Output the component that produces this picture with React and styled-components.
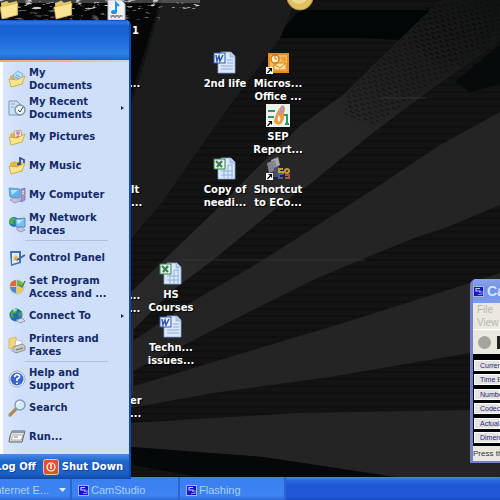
import React from 'react'
import styled, { createGlobalStyle } from 'styled-components';

const GlobalStyle = createGlobalStyle`
  * {
    box-sizing: border-box;
  }
  body {
    margin: 0;
    background: #121212;
    font-family: "DejaVu Sans", Verdana, sans-serif;
    font-size: 10px;
    line-height: 13px;
  }
  button {
    margin: 0;
    padding: 0;
    border: 0;
    background: none;
    color: inherit;
    font: inherit;
  }
`

const Screen = styled.div`
  position: relative;
  display: flex;
  flex-direction: column;
  height: 100vh;
  overflow: hidden;
`
const Desktop = styled.main`
  position: relative;
  flex: 1;
  overflow: hidden;
`
const WallpaperSvg = styled.svg`
  display: block;
  width: 100%;
  height: 100%;
`

/* desktop icons sit freely on the wallpaper */
const Shortcut = styled.a`
  position: absolute;
  left: ${props => props.$x}px;
  top: ${props => props.$y}px;
  width: 54px;
  display: flex;
  flex-direction: column;
  align-items: center;
  gap: 2px;
  color: #fff;
  font-weight: bold;
  text-align: center;
  text-decoration: none;
  white-space: pre;
  text-shadow: 1px 1px 1px #000;

  svg {
    width: 24px;
    height: 24px;
  }
`
const CoveredLabel = styled(Shortcut)`
  width: auto;
  align-items: flex-start;
  text-align: left;
`

const Menu = styled.nav`
  position: absolute;
  left: 0;
  bottom: 21px;
  width: 131px;
  overflow: hidden;
  border-right: 2px solid #1148b8;
  border-top-right-radius: 5px;
  background: #cfdffa;
`
const MenuHeader = styled.div`
  height: 40px;
  background: linear-gradient(#0f4fb8 0, #2a7be4 2px, #1660d0 6px, #1a66d6 40%, #2f80e6 85%, #1f62c8);
`
const MenuBody = styled.div`
  border-left: 3px solid #fff;
  padding: 2px 0 3px 5px;
  background: linear-gradient(90deg, #d9e6fc, #cfdffa 20px);
`
const Stripe = styled.div`
  height: 2px;
  background: linear-gradient(90deg, #f4a860, #e8b890 50%, #c8d4f0);
`
const MenuItem = styled.button`
  display: flex;
  align-items: center;
  gap: 3px;
  width: 100%;
  height: 29px;
  color: #142a68;
  font-weight: bold;
  text-align: left;

  > svg {
    flex: none;
    width: 18px;
    height: 18px;
  }
`
const MenuLabel = styled.span`
  width: 81px;
`
const Submenu = styled.span`
  margin-left: 8px;
  border: 2px solid transparent;
  border-left: 3px solid #142a68;
  border-right: 0;
`
const Divider = styled.hr`
  height: 1px;
  margin: 2px 21px 2px 17px;
  border: 0;
  background: #b4c0da;
`
const MenuFooter = styled.div`
  display: flex;
  justify-content: flex-end;
  align-items: center;
  gap: 7px;
  height: 25px;
  padding-right: 6px;
  background: linear-gradient(#4a8ce6, #1f66cc 30%, #1a60c8 80%, #1148a4);
  color: #fff;
  font-weight: bold;
`
const FooterButton = styled.button`
  flex: none;
  display: flex;
  align-items: center;
  gap: 3px;
  text-shadow: 1px 1px 0 #12409a;
`

const Taskbar = styled.footer`
  display: flex;
  height: 23px;
  background: linear-gradient(#3f82ee 0, #2a66de 4px, #1f57d4 9px, #1f57d6 20px, #1a48b8);
`
const Task = styled.button`
  flex: none;
  display: flex;
  align-items: center;
  justify-content: ${props => props.$cut ? 'flex-end' : 'flex-start'};
  gap: ${props => props.$cut ? 10 : 2}px;
  width: ${props => props.$w}px;
  padding: 3px 4px 0 6px;
  overflow: hidden;
  border-right: 2px solid #2b66cf;
  background: linear-gradient(#3b7ef0, #3d84f2 80%, #2f68da);
  color: #a8d0f8;
  font-family: "Liberation Sans", Arial, sans-serif;
  font-size: 11px;
  white-space: nowrap;

  svg {
    flex: none;
  }
`

const Window = styled.section`
  position: absolute;
  left: 470px;
  right: 0;
  top: 279px;
  overflow: hidden;
  border: 2px solid #7480cc;
  border-width: 0 0 2px 3px;
  border-top-left-radius: 6px;
  background: #ebe9df;
  font-family: "Liberation Sans", Arial, sans-serif;
  white-space: nowrap;
`
const TitleBar = styled.header`
  display: flex;
  align-items: center;
  gap: 3px;
  height: 24px;
  background: linear-gradient(#8aa4ea, #6f92e4 40%, #7c9cec);
  color: #d8e4fc;
  font-size: 14px;
  font-weight: bold;

  svg {
    flex: none;
  }
`
const MenuBar = styled.div`
  display: flex;
  flex-direction: column;
  align-items: flex-start;
  padding-left: 4px;
  border-bottom: 1px solid #fff;
  color: #b9b7ac;
`
const Tools = styled.div`
  display: flex;
  align-items: center;
  gap: 6px;
  height: 24px;
  padding-left: 5px;
`
const ToolButton = styled.button`
  flex: none;
  width: 13px;
  height: 13px;
  border-radius: ${props => props.$round ? '50%' : '0'};
  background: ${props => props.$color};
`
const Stats = styled.ul`
  display: flex;
  flex-direction: column;
  justify-content: space-between;
  height: 92px;
  margin: 0;
  padding: 6px 0 3px 1px;
  background: #000;
  list-style: none;
`
const Stat = styled.li`
  height: 11px;
  padding-left: 5px;
  border: 1px solid #fff;
  background: #e4e3e2;
  color: #2a2470;
  font-size: 7px;
  line-height: 9px;
`
const Status = styled.p`
  margin: 0;
  color: #333;
  font-size: 8px;
  line-height: 15px;
`

const Wallpaper = () => (
  <WallpaperSvg viewBox="0 0 500 477" preserveAspectRatio="xMinYMin slice" aria-hidden="true">
    <defs>
      <pattern id="lines" width="8" height="7" patternUnits="userSpaceOnUse">
        <rect width="8" height="2" fill="#000" opacity=".2" />
      </pattern>
      <pattern id="dots" width="6" height="5" patternUnits="userSpaceOnUse" patternTransform="rotate(-12)">
        <circle cx="2" cy="2" r="1" fill="#060606" />
        <rect x="3" y="3" width="2" height="1" fill="#0b0b0b" />
      </pattern>
      <filter id="grain" x="0" y="0" width="100%" height="100%">
        <feTurbulence type="fractalNoise" baseFrequency=".12 .4" numOctaves="3" seed="4" />
        <feColorMatrix values="0 0 0 0 .6  0 0 0 0 .6  0 0 0 0 .6  6 0 0 0 -3.500" />
      </filter>
      <linearGradient id="fade" x1="0" y1="1" x2="1" y2="0">
        <stop offset="0" stopColor="#292929" />
        <stop offset=".6" stopColor="#262626" />
        <stop offset="1" stopColor="#101211" />
      </linearGradient>
    </defs>
    <rect width="500" height="477" fill="#131313" />
    <rect width="500" height="477" fill="url(#lines)" />
    <path d="M0 0H160L142 60L131 95V120H0Z" fill="#050606" />
    <path d="M300 10H430L400 40L362 38H275Z" fill="#010707" />
    <path d="M500 44L455 82L470 92L500 84Z" fill="#050b0a" />
    <g fill="#242424">
      <path d="M162 0H296L280 38L225 112L160 205L131 238V105L146 58Z" fill="#1c1c1c" />
      <path d="M440 0H500V40L480 55L430 90L370 135L310 184L280 205L213 260L173 290L131 332V292L167 257L213 213L250 175L300 126L343 95Z" fill="url(#fade)" />
      <path d="M500 112L440 145L380 185L310 230L263 260L190 303L131 342V372L233 320L313 280L360 260L417 237L445 228L500 205Z" />
      <path d="M500 273L470 283L343 323L263 347L131 387V408L213 393L330 377L470 353L500 348Z" />
      <path d="M500 408L470 410L297 413L131 423V447L263 457L397 477H500Z" />
    </g>
    <path d="M131 447L263 457L380 475L390 477H200L131 465Z" fill="#050808" />
    <path d="M132 330V395" stroke="#2d2d2d" strokeWidth="3" />
    <path d="M430 10H490V45L430 85L375 125L345 115V95Z" fill="url(#dots)" opacity=".7" />
    <path d="M428 4L500 0V38L478 40L455 62L425 58L410 35Z" fill="url(#dots)" opacity=".7" />
    <path d="M180 260H365M380 98H426" stroke="#333" />
    <rect width="200" height="3" fill="#999" opacity=".4" />
    <rect width="200" height="9" filter="url(#grain)" />
    <rect y="7" width="160" height="13" filter="url(#grain)" opacity=".45" />
    <circle cx="300" cy="-3" r="13" fill="#e0c064" stroke="#b8903c" />
    <circle cx="299" cy="-5" r="9" fill="#ecd890" />
  </WallpaperSvg>
)

const Folder = () => (
  <svg viewBox="0 0 24 24">
    <path d="M4 5L10 3L12 5L20 3L21 17L5 21Z" fill="#e8c860" />
    <path d="M3 9L21 5L20 17L5 21Z" fill="#f8e492" stroke="#caa348" strokeWidth=".6" />
  </svg>
)

const Wave = () => (
  <svg viewBox="0 0 24 24">
    <path d="M4 2H17L21 6V22H4Z" fill="#eef2f4" stroke="#b4bcc4" />
    <path d="M12 14V5L15 8" fill="none" stroke="#2590dc" strokeWidth="2" />
    <ellipse cx="10" cy="14" rx="3" ry="2" fill="#2590dc" />
    <path d="M6 18H19M7 20L9 17L11 20L13 17L15 20L17 17" fill="none" stroke="#707880" />
  </svg>
)

const Page = ({ color, kind }) => (
  <svg viewBox="0 0 24 24">
    <path d="M8 1H18L22 5V22H5V12Z" fill="#dce8fc" stroke="#88a4d8" strokeWidth=".8" />
    <path d="M17 1V6H22" fill="#b4c8ec" stroke="#88a4d8" strokeWidth=".6" />
    {kind === 'word'
      ? <path d="M14 9H20M14 12H20M8 15H20M8 18H20" stroke="#8ca8dc" />
      : <path d="M8 14H20M8 18H20M15 8H20M11 13V21M15 8V21M19 8V21" stroke="#8cb4d4" />}
    <rect x="1" y="2" width="11" height="10" fill="#e6eef8" stroke={color} />
    {kind === 'word'
      ? <path d="M3 4L4 10L6 5L7 10L10 4" fill="none" stroke={color} strokeWidth="1.5" />
      : <path d="M3 4L9 10M9 4L4 10" stroke={color} strokeWidth="2.2" />}
  </svg>
)

const ArrowBadge = () => (
  <g>
    <rect x="0" y="16" width="7" height="7" fill="#fff" />
    <path d="M1.500 22L5 18M2.500 17.500H5.500V20.500" fill="none" stroke="#000" strokeWidth="1.2" />
  </g>
)

const Outlook = () => (
  <svg viewBox="0 0 24 24">
    <rect x="2" y="2" width="21" height="20" fill="#e88c20" />
    <rect x="4" y="4" width="17" height="16" fill="#f6b850" />
    <path d="M12 12H20V19H8V14Z" fill="#fbe09c" stroke="#dc8418" />
    <path d="M9 14L14 17L20 12M15 7H20M16 9H20" fill="none" stroke="#dc8418" />
    <circle cx="9" cy="8" r="4" fill="#fff0c8" stroke="#cf7010" strokeWidth="1.3" />
    <path d="M9 5V8H11" fill="none" stroke="#cf7010" />
    <ArrowBadge />
  </svg>
)

const Report = () => (
  <svg viewBox="0 0 24 24">
    <rect width="24" height="23" fill="#e9f3ec" />
    <path d="M2 7H9M2 13H8" stroke="#269a68" strokeWidth="2" />
    <path d="M16 1Q21 2 18 9Q19 15 15 20Q11 22 8 18Q9 9 16 1Z" fill="#f09a3c" />
    <path d="M16 2Q20 2 17 8L12 12Z" fill="#b094cc" />
    <path d="M13 11Q10 16 13 18Q16 15 13 11Z" fill="#f8eedc" />
    <path d="M18 11H21V20M19 20H23" fill="none" stroke="#269a68" strokeWidth="2" />
    <ArrowBadge />
  </svg>
)

const Emulator = () => (
  <svg viewBox="0 0 24 24">
    <path d="M5 3L12 0L14 8L7 12Z" fill="#a6a6ac" />
    <path d="M1 6L9 3L11 13L3 16Z" fill="#85858d" />
    <path d="M8 11L13 9V20H7Z" fill="#4c4c6c" />
    <g fill="none" strokeWidth="2">
      <path d="M17 12H13V15H17V17" stroke="#b0a82c" />
      <circle cx="21" cy="14" r="2" stroke="#c8982c" />
      <path d="M17 17H13V21H17" stroke="#4060b8" />
      <path d="M19 18H23V21H19" stroke="#b05440" />
    </g>
    <ArrowBadge />
  </svg>
)

const OpenFolder = ({ children }) => (
  <svg viewBox="0 0 18 18">
    <path d="M2 6L7 4L8 5L14 4L15 14L3 17Z" fill="#e0b548" />
    {children}
    <path d="M1 9L9 10L17 6L14 14L3 17Z" fill="#f9e68c" stroke="#c39a38" strokeWidth=".7" />
  </svg>
)

const icons = {
  documents: (
    <OpenFolder>
      <path d="M5 5L10 1L15 4L13 10L7 11Z" fill="#b8dcf8" stroke="#6fa8d4" strokeWidth=".8" />
      <path d="M8 5L12 7M7 7L11 9" stroke="#58a0d8" />
    </OpenFolder>
  ),
  recent: (
    <svg viewBox="0 0 18 18">
      <path d="M1 2H9L12 5V16H1Z" fill="#cfe1f1" stroke="#7896b4" />
      <path d="M3 5H7M3 8H6" stroke="#8ba9c9" />
      <circle cx="12" cy="11" r="5" fill="#eff7f9" stroke="#7a94a2" strokeWidth="1.4" />
      <path d="M10 11L12 13L15 8" fill="none" stroke="#30495c" />
    </svg>
  ),
  pictures: (
    <OpenFolder>
      <path d="M6 3L13 2L14 9L7 11Z" fill="#f4e4d4" stroke="#bc8c64" strokeWidth=".7" />
      <circle cx="10" cy="5" r="2" fill="#a994bc" />
      <path d="M7 10L10 7L13 10Z" fill="#d08250" />
    </OpenFolder>
  ),
  music: (
    <OpenFolder>
      <path d="M12 7V1L16 3V6" fill="none" stroke="#30508c" strokeWidth="1.8" />
      <ellipse cx="11" cy="7" rx="2" ry="1.500" fill="#30508c" />
    </OpenFolder>
  ),
  computer: (
    <svg viewBox="0 0 18 18">
      <path d="M13 3L17 2V14L13 16Z" fill="#a496cc" stroke="#665c98" strokeWidth=".6" />
      <path d="M14 6L16 5M14 8L16 7" stroke="#eee" />
      <path d="M1 2L12 3V12L2 11Z" fill="#55b6ee" stroke="#7c90b8" />
      <path d="M3 4L10 4L4 9Z" fill="#b0e6fc" />
      <path d="M5 12H9L13 15L6 17L2 14Z" fill="#bfc2d6" stroke="#7c80a0" strokeWidth=".6" />
    </svg>
  ),
  network: (
    <svg viewBox="0 0 18 18">
      <circle cx="6" cy="7" r="5" fill="#2878b8" />
      <path d="M2 4Q7 1 8 5Q4 5 6 9Q3 10 1 7Z" fill="#4fae48" />
      <path d="M7 4L17 3V12L8 12Z" fill="#72c4f4" stroke="#5074ac" strokeWidth=".8" />
      <path d="M9 5L15 5L10 9Z" fill="#c4ecfc" />
      <path d="M9 13L14 12L17 15L13 17L9 15Z" fill="#c4c6da" stroke="#7478a4" strokeWidth=".6" />
    </svg>
  ),
  control: (
    <svg viewBox="0 0 18 18">
      <path d="M2 2L13 2V14L3 17Z" fill="#3a70c0" />
      <path d="M4 4L11 4V13L4 15Z" fill="#e2f1fb" />
      <path d="M8 5L9 8L11 7L9 10L10 13L7 11L5 12L6 9L4 7L7 8Z" fill="#e4b044" />
      <path d="M9 11L17 6" stroke="#45678c" strokeWidth="2" />
    </svg>
  ),
  programs: (
    <svg viewBox="0 0 18 18">
      <circle cx="9" cy="9" r="7.500" fill="#c2c8b8" />
      <path d="M8 2V8H2Q2 3 8 2Z" fill="#e06838" />
      <path d="M9 2Q15 3 15 8H9Z" fill="#6cb84c" />
      <path d="M2 9H8V15Q3 14 2 9Z" fill="#4a88d4" />
      <path d="M9 9H15Q14 15 9 15Z" fill="#f2cb40" />
      <path d="M11 7L14 9L17 3" fill="none" stroke="#468838" strokeWidth="1.5" />
    </svg>
  ),
  connect: (
    <svg viewBox="0 0 18 18">
      <circle cx="8" cy="8" r="6.500" fill="#216bb0" />
      <path d="M3 5Q5 1 10 2L8 6L5 7L6 11L3 10Z" fill="#46aa50" />
      <path d="M10 6L14 4V9L11 10Z" fill="#42a056" />
      <path d="M5 2Q8 1 9 3L6 5Z" fill="#a8e0e0" />
      <path d="M8 13L14 11L17 14L12 16Z" fill="#d5dbe8" stroke="#7888a4" strokeWidth=".8" />
    </svg>
  ),
  printers: (
    <svg viewBox="0 0 18 18">
      <path d="M1 3L8 1L9 11L1 13Z" fill="#f2d678" stroke="#cda648" strokeWidth=".6" />
      <path d="M8 4L14 5V10H7Z" fill="#fff" stroke="#a0a8b4" strokeWidth=".6" />
      <path d="M5 11L14 8L17 10V14L8 17L5 15Z" fill="#cbcbca" stroke="#80807e" strokeWidth=".8" />
      <path d="M8 14L15 12" stroke="#666" />
      <circle cx="5" cy="14" r="2" fill="#b8bcc4" />
    </svg>
  ),
  help: (
    <svg viewBox="0 0 18 18">
      <circle cx="9" cy="9" r="8" fill="#e9effa" stroke="#a2b0c8" />
      <circle cx="9" cy="9" r="6.500" fill="#3768cc" />
      <path d="M6.500 7Q7 4.500 9.500 4.500Q12 5 11.500 7Q11 8.500 9 9V11M9 12.500V14" fill="none" stroke="#fff" strokeWidth="1.7" />
    </svg>
  ),
  search: (
    <svg viewBox="0 0 18 18">
      <path d="M2 16L8 10" stroke="#b48858" strokeWidth="3.200" strokeLinecap="round" />
      <circle cx="12" cy="6" r="5" fill="#cdeefb" stroke="#8a9cb4" strokeWidth="1.5" />
      <path d="M9 6Q9 3 12 3" fill="none" stroke="#fff" strokeWidth="1.5" />
    </svg>
  ),
  run: (
    <svg viewBox="0 0 18 18">
      <path d="M4 3H17L14 14H1L2 8Z" fill="#e4e6e2" stroke="#5c6068" />
      <path d="M4 3H17L16 5H3Z" fill="#8d97a4" />
      <path d="M5 7H15L13 12H3Z" fill="#fff" stroke="#9a9c9c" strokeWidth=".8" />
      <path d="M6 9H10" stroke="#777" />
    </svg>
  ),
}

const Power = () => (
  <svg width="16" height="16" viewBox="0 0 16 16">
    <rect x=".5" y=".5" width="15" height="15" rx="2" fill="#dc5430" stroke="#f4c0a8" />
    <circle cx="8" cy="8" r="4" fill="none" stroke="#fff" strokeWidth="1.2" />
    <path d="M8 5V10" stroke="#fff" strokeWidth="1.4" />
  </svg>
)

const CamIcon = () => (
  <svg width="11" height="11" viewBox="0 0 11 11">
    <rect x=".5" y=".5" width="10" height="10" fill="#1616c8" stroke="#a8b0ec" />
    <path d="M7 2.500H3V5H7V7" fill="none" stroke="#c4cafa" strokeWidth="1.2" />
    <path d="M5 8.500H9V5" fill="none" stroke="#8890e8" />
  </svg>
)

const places = [
  ['documents', 'My Documents'],
  ['recent', 'My Recent Documents', true],
  ['pictures', 'My Pictures'],
  ['music', 'My Music'],
  ['computer', 'My Computer'],
  ['network', 'My Network Places'],
]
const settings = [
  ['control', 'Control Panel'],
  ['programs', 'Set Program Access and ...'],
  ['connect', 'Connect To', true],
  ['printers', 'Printers and Faxes'],
]
const tools = [
  ['help', 'Help and Support'],
  ['search', 'Search'],
  ['run', 'Run...'],
]

const MenuGroup = ({ items }) => items.map(([icon, label, sub]) => (
  <MenuItem key={icon}>
    {icons[icon]}
    <MenuLabel>{label}</MenuLabel>
    {sub && <Submenu />}
  </MenuItem>
))

const shortcuts = [
  { x: -18, y: -2, icon: <Folder /> },
  { x: 36, y: -2, icon: <Folder /> },
  { x: 89, y: -2, icon: <Wave /> },
  { x: 198, y: 51, icon: <Page kind="word" color="#3058b0" />, label: '2nd life' },
  { x: 251, y: 51, icon: <Outlook />, label: 'Micros...\nOffice ...' },
  { x: 251, y: 104, icon: <Report />, label: 'SEP\nReport...' },
  { x: 198, y: 157, icon: <Page kind="excel" color="#388444" />, label: 'Copy of\nneedi...' },
  { x: 251, y: 157, icon: <Emulator />, label: 'Shortcut\nto ECo...' },
  { x: 144, y: 262, icon: <Page kind="excel" color="#388444" />, label: 'HS\nCourses' },
  { x: 144, y: 315, icon: <Page kind="word" color="#3058b0" />, label: 'Techn...\nissues...' },
]

// what still shows of the labels behind the start menu
const covered = [
  { x: 132, y: 24, label: '1' },
  { x: 129, y: 77, label: '...' },
  { x: 131, y: 183, label: 'lt\n...' },
  { x: 129, y: 289, label: '...\n...' },
  { x: 130, y: 394, label: 'er\n...' },
]

const stats = ['Current', 'Time Elapsed', 'Number', 'Codec', 'Actual', 'Dimension']

const App = () => (
  <Screen>
    <GlobalStyle />
    <Desktop>
      <Wallpaper />
      {shortcuts.map((s, i) => (
        <Shortcut key={i} href="#" $x={s.x} $y={s.y}>{s.icon}{s.label}</Shortcut>
      ))}
      {covered.map((s, i) => (
        <CoveredLabel key={i} href="#" $x={s.x} $y={s.y}>{s.label}</CoveredLabel>
      ))}
      <Window>
        <TitleBar><CamIcon />CamStudio</TitleBar>
        <MenuBar>
          <button>File</button>
          <button>View</button>
        </MenuBar>
        <Tools>
          <ToolButton $round $color="#a5a5a0" aria-label="Record" />
          <ToolButton $color="#20241f" aria-label="Pause" />
        </Tools>
        <Stats>
          {stats.map(s => <Stat key={s}>{s}</Stat>)}
        </Stats>
        <Status>Press the</Status>
      </Window>
    </Desktop>
    <Taskbar>
      <Task $w={72} $cut>
        Internet E...
        <svg width="7" height="4" viewBox="0 0 7 4"><path d="M0 0H7L3.500 4Z" fill="#d8ecff" /></svg>
      </Task>
      <Task $w={108}><CamIcon />CamStudio</Task>
      <Task $w={106}><CamIcon />Flashing</Task>
    </Taskbar>
    <Menu>
      <MenuHeader />
      <Stripe />
      <MenuBody>
        <MenuGroup items={places} />
        <Divider />
        <MenuGroup items={settings} />
        <Divider />
        <MenuGroup items={tools} />
      </MenuBody>
      <MenuFooter>
        <FooterButton>Log Off</FooterButton>
        <FooterButton><Power />Shut Down</FooterButton>
      </MenuFooter>
    </Menu>
  </Screen>
)

export default App;
